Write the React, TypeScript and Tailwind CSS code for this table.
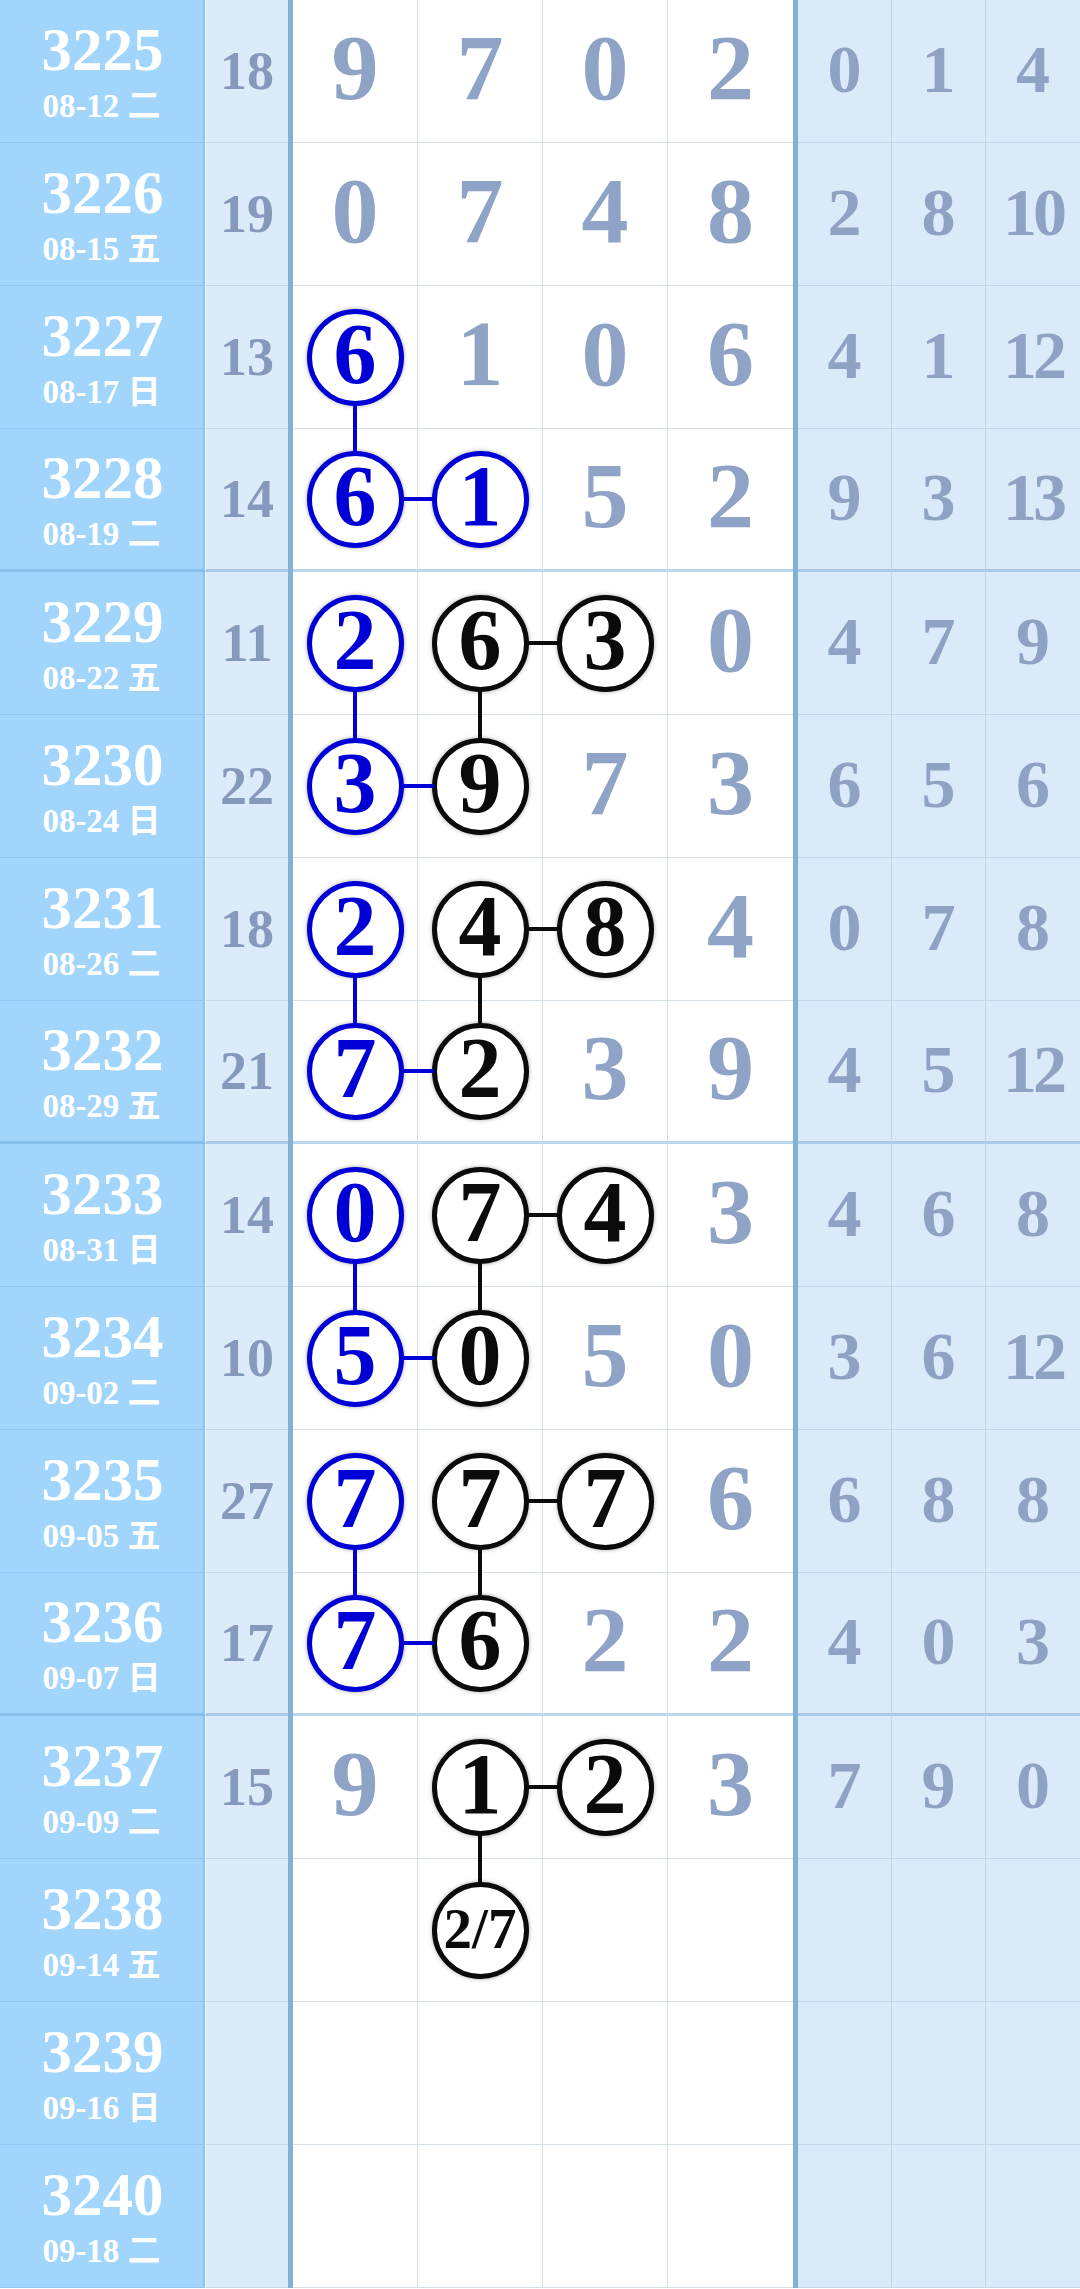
import React from "react";

type Circ = { v: string; c: "b" | "k"; down?: boolean; right?: boolean; small?: boolean };
type G = string | Circ;

const B = (v: string, o: Partial<Circ> = {}): Circ => ({ v, c: "b", ...o });
const K = (v: string, o: Partial<Circ> = {}): Circ => ({ v, c: "k", ...o });

type Row = { p: string; d: string; s: string; g: G[]; r: string[] };

const rows: Row[] = [
  { p: "3225", d: "08-12 二", s: "18", g: ["9", "7", "0", "2"], r: ["0", "1", "4"] },
  { p: "3226", d: "08-15 五", s: "19", g: ["0", "7", "4", "8"], r: ["2", "8", "10"] },
  { p: "3227", d: "08-17 日", s: "13", g: [B("6", { down: true }), "1", "0", "6"], r: ["4", "1", "12"] },
  { p: "3228", d: "08-19 二", s: "14", g: [B("6", { right: true }), B("1"), "5", "2"], r: ["9", "3", "13"] },
  { p: "3229", d: "08-22 五", s: "11", g: [B("2", { down: true }), K("6", { down: true, right: true }), K("3"), "0"], r: ["4", "7", "9"] },
  { p: "3230", d: "08-24 日", s: "22", g: [B("3", { right: true }), K("9"), "7", "3"], r: ["6", "5", "6"] },
  { p: "3231", d: "08-26 二", s: "18", g: [B("2", { down: true }), K("4", { down: true, right: true }), K("8"), "4"], r: ["0", "7", "8"] },
  { p: "3232", d: "08-29 五", s: "21", g: [B("7", { right: true }), K("2"), "3", "9"], r: ["4", "5", "12"] },
  { p: "3233", d: "08-31 日", s: "14", g: [B("0", { down: true }), K("7", { down: true, right: true }), K("4"), "3"], r: ["4", "6", "8"] },
  { p: "3234", d: "09-02 二", s: "10", g: [B("5", { right: true }), K("0"), "5", "0"], r: ["3", "6", "12"] },
  { p: "3235", d: "09-05 五", s: "27", g: [B("7", { down: true }), K("7", { down: true, right: true }), K("7"), "6"], r: ["6", "8", "8"] },
  { p: "3236", d: "09-07 日", s: "17", g: [B("7", { right: true }), K("6"), "2", "2"], r: ["4", "0", "3"] },
  { p: "3237", d: "09-09 二", s: "15", g: ["9", K("1", { down: true, right: true }), K("2"), "3"], r: ["7", "9", "0"] },
  { p: "3238", d: "09-14 五", s: "", g: ["", K("2/7", { small: true }), "", ""], r: ["", "", ""] },
  { p: "3239", d: "09-16 日", s: "", g: ["", "", "", ""], r: ["", "", ""] },
  { p: "3240", d: "09-18 二", s: "", g: ["", "", "", ""], r: ["", "", ""] },
];

function DigitCell({ g, last, group }: { g: G; last: boolean; group: boolean }) {
  const base =
    "relative w-[125px] h-full flex items-center justify-center bg-white " +
    (last ? "" : "border-r border-r-[#d2dfe9] ") +
    (group ? "border-b-[3px] border-b-[#b9d8ee]" : "border-b border-b-[#d6dee6]");
  if (typeof g === "string") {
    return (
      <div className={base}>
        <span className="text-[94px] leading-none font-bold text-[#8ea3c5] pb-[8px]">{g}</span>
      </div>
    );
  }
  const blue = g.c === "b";
  return (
    <div className={base}>
      <div
        className={
          "w-[97px] h-[97px] rounded-full border-[5px] bg-white flex items-center justify-center shadow-[0_0_4px_rgba(0,0,0,0.35)] " +
          (blue ? "border-[#0000d6] text-[#0000d6]" : "border-[#0b0b0b] text-[#0b0b0b]")
        }
      >
        {g.small ? (
          <span className="text-[57px] leading-none font-bold pb-[4px]">{g.v}</span>
        ) : (
          <span className="text-[86px] leading-none font-bold pb-[6px]">{g.v}</span>
        )}
      </div>
      {g.down && (
        <div
          className={
            "absolute z-10 left-[calc(50%-2px)] top-[calc(50%+47px)] w-[4px] h-[50px] " +
            (blue ? "bg-[#0000d6]" : "bg-[#0b0b0b]")
          }
        />
      )}
      {g.right && (
        <div
          className={
            "absolute z-10 left-[calc(50%+47px)] top-[calc(50%-2px)] h-[4px] w-[32px] " +
            (blue ? "bg-[#0000d6]" : "bg-[#0b0b0b]")
          }
        />
      )}
    </div>
  );
}

export default function App() {
  return (
    <div className="w-[1080px] bg-white font-['Liberation_Serif','Noto_Sans_CJK_SC',serif]">
      {rows.map((row, i) => {
        const group = i === 3 || i === 7 || i === 11;
        return (
          <div key={row.p} className="flex h-[143px]">
            <div
              className={
                "w-[205px] h-full bg-[#a1d5fb] border-r-2 border-r-[#8ec3ec] flex flex-col items-center justify-center text-white font-bold " +
                (group ? "border-b-[3px] border-b-[#87bfe9]" : "border-b border-b-[#8fc6ef]")
              }
            >
              <div className="text-[61px] leading-[60px] pl-[2px]">{row.p}</div>
              <div className="text-[33px] leading-[32px] mt-[10px] whitespace-pre">{row.d}</div>
            </div>
            <div
              className={
                "w-[83px] h-full bg-[#dbebfa] border-l border-l-[#edf5fd] flex items-center justify-center " +
                (group ? "border-b-[3px] border-b-[#aacbe7]" : "border-b border-b-[#c6d7e6]")
              }
            >
              <span className="text-[54px] leading-none font-bold text-[#8499bb]">{row.s}</span>
            </div>
            <div className="w-[5px] h-full bg-[#84b2d6]" />
            {row.g.map((g, j) => (
              <DigitCell key={j} g={g} last={j === 3} group={group} />
            ))}
            <div className="w-[5px] h-full bg-[#82b1d6]" />
            {row.r.map((v, j) => (
              <div
                key={j}
                className={
                  "w-[94px] h-full bg-[#daeaf9] flex items-center justify-center " +
                  (j < 2 ? "border-r border-r-[#c2d6eb] " : "") +
                  (group ? "border-b-[3px] border-b-[#a9cbe9]" : "border-b border-b-[#c3d7ec]")
                }
              >
                <span
                  className={
                    "text-[68px] leading-none font-bold text-[#8fa2c4] pb-[4px] " +
                    (v.length > 1 ? "tracking-[-4px]" : "")
                  }
                >
                  {v}
                </span>
              </div>
            ))}
          </div>
        );
      })}
    </div>
  );
}
